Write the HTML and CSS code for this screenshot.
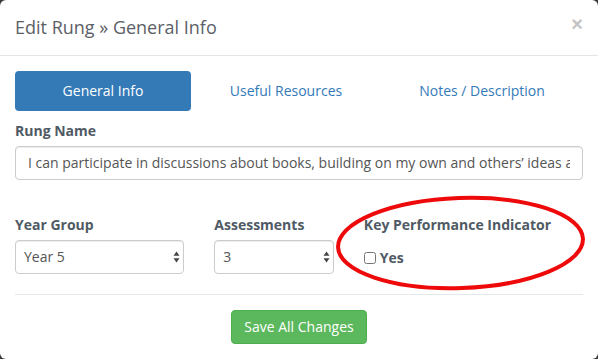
FILE: index.html
```html
<!DOCTYPE html>
<html lang="en">
<head>
  <meta charset="UTF-8">
  <title>Edit Rung</title>
  <meta name="viewport" content="width=device-width, initial-scale=1.0">
  <link rel="stylesheet" href="styles.css">
</head>
<body>
  <div class="modal">
    <div class="modal-header">
      <h4 class="modal-title">Edit Rung &raquo; General Info</h4>
      <button type="button" class="close">&times;</button>
    </div>
    <div class="modal-body">
      <ul class="nav-pills">
        <li class="active"><a href="#">General Info</a></li>
        <li><a href="#">Useful Resources</a></li>
        <li><a href="#">Notes / Description</a></li>
      </ul>

      <div class="form-group">
        <label for="rungName">Rung Name</label>
        <input type="text" id="rungName" class="form-control" value="I can participate in discussions about books, building on my own and others’ ideas and challenging views courteously.">
      </div>

      <div class="row">
        <div class="col col-4">
          <label for="yearGroup">Year Group</label>
          <div class="select-wrap">
            <select id="yearGroup" class="form-control">
              <option>Year 5</option>
            </select>
            <!-- up/down arrows -->
            <svg class="arrows" width="7" height="12" viewBox="0 0 7 12">
              <path d="M3.5 0.5L6.5 4.8H0.5Z" fill="#444"/>
              <path d="M3.5 11.5L6.5 7.2H0.5Z" fill="#444"/>
            </svg>
          </div>
        </div>
        <div class="col col-3">
          <label for="assessments">Assessments</label>
          <div class="select-wrap">
            <select id="assessments" class="form-control">
              <option>3</option>
            </select>
            <svg class="arrows" width="7" height="12" viewBox="0 0 7 12">
              <path d="M3.5 0.5L6.5 4.8H0.5Z" fill="#444"/>
              <path d="M3.5 11.5L6.5 7.2H0.5Z" fill="#444"/>
            </svg>
          </div>
        </div>
        <div class="col col-5">
          <label>Key Performance Indicator</label>
          <label class="checkbox"><input type="checkbox"> Yes</label>
        </div>
      </div>

      <hr>

      <div class="actions">
        <button type="button" class="btn-success">Save All Changes</button>
      </div>
    </div>

    <!-- red annotation ring -->
    <svg class="annotation" width="598" height="359" viewBox="0 0 598 359">
      <ellipse cx="460.5" cy="243" rx="122.5" ry="45" fill="none" stroke="#ee0a0a" stroke-width="4" transform="rotate(-2 460.5 243)"/>
    </svg>
  </div>
</body>
</html>
```

FILE: styles.css
```css
body {
  margin: 0;
  background-color: #3a3a3a;
  font-family: "Open Sans", "Helvetica Neue", Arial, sans-serif;
  font-size: 14px;
  line-height: 1.42857;
  color: #555;
}
.modal {
  position: relative;
  width: 598px;
  height: 359px;
  background-color: #fff;
  border-radius: 6px;
  overflow: hidden;
}
.modal-header {
  display: flex;
  justify-content: space-between;
  align-items: center;
  padding: 14px 15px 15px;
  border-bottom: 1px solid #e5e5e5;
}
.modal-title {
  margin: 0;
  font-size: 18px;
  font-weight: 400;
  line-height: 26px;
  color: #5b6066;
}
.close {
  border: none;
  background: none;
  padding: 0;
  margin-top: -6px;
  font-family: "Helvetica Neue", Arial, sans-serif;
  font-size: 20px;
  font-weight: 700;
  line-height: 1;
  color: #c4c4c4;
  cursor: pointer;
}
.modal-body {
  padding: 15px;
}
.nav-pills {
  list-style: none;
  margin: 0 0 10px;
  padding: 0;
  display: grid;
  grid-template-columns: 176fr 186fr 202fr;
  gap: 2px;
}
.nav-pills a {
  display: block;
  padding: 10px 0;
  text-align: center;
  border-radius: 4px;
  color: #337ab7;
  text-decoration: none;
}
.nav-pills .active a {
  background-color: #337ab7;
  color: #fff;
}
label {
  display: block;
  margin-bottom: 5px;
  font-weight: 700;
  color: #4f5a64;
}
.form-group {
  margin-bottom: 35px;
}
.form-control {
  display: block;
  width: 100%;
  height: 34px;
  box-sizing: border-box;
  padding: 6px 12px;
  font-family: inherit;
  font-size: 14px;
  color: #555;
  background-color: #fff;
  border: 1px solid #ccc;
  border-radius: 4px;
  box-shadow: inset 0 1px 1px rgba(0, 0, 0, 0.075);
}
select.form-control {
  -webkit-appearance: none;
  appearance: none;
  padding: 6px 8px;
}
.select-wrap {
  position: relative;
}
.select-wrap .arrows {
  position: absolute;
  right: 4px;
  top: 11px;
  pointer-events: none;
}
.row {
  display: flex;
  margin: 0 -15px;
}
.col {
  box-sizing: border-box;
  padding: 0 15px;
}
.col-4 { width: 33.3333%; }
.col-3 { width: 25%; }
.col-5 { width: 41.6667%; }
.checkbox {
  display: flex;
  align-items: center;
  margin-top: 13px;
}
.checkbox input {
  width: 12px;
  height: 12px;
  margin: 1px 4px 0 0;
}
hr {
  margin: 20px 0 15px;
  border: 0;
  border-top: 1px solid #e3e8ea;
}
.actions {
  display: flex;
  justify-content: center;
}
.btn-success {
  padding: 6px 12px;
  font-family: inherit;
  font-size: 14px;
  line-height: 1.42857;
  color: #fff;
  background-color: #5cb85c;
  border: 1px solid #4cae4c;
  border-radius: 4px;
  cursor: pointer;
}
.annotation {
  position: absolute;
  top: 0;
  left: 0;
  pointer-events: none;
}
```
